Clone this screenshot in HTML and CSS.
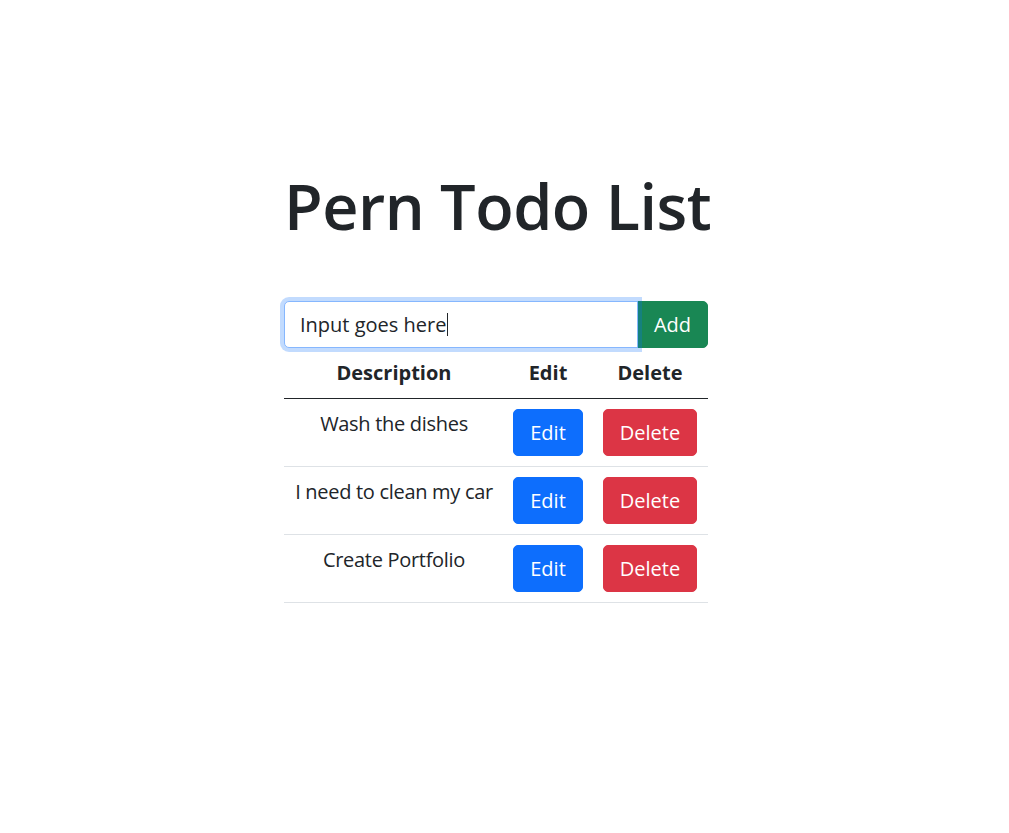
FILE: index.html
```html
<!DOCTYPE html>
<html lang="en">
<head>
<meta charset="utf-8">
<title>Pern Todo List</title>
<link rel="stylesheet" href="styles.css">
</head>
<body>
<div class="page">
  <main class="app">
    <h1 class="title">Pern Todo List</h1>
    <form class="input-group">
      <div class="form-control focused"><span class="value">Input goes here</span><span class="caret"></span></div>
      <button type="button" class="btn btn-success btn-add">Add</button>
    </form>
    <table class="table">
      <thead>
        <tr>
          <th class="col-desc">Description</th>
          <th class="col-edit">Edit</th>
          <th class="col-del">Delete</th>
        </tr>
      </thead>
      <tbody>
        <tr>
          <td class="desc">Wash the dishes</td>
          <td><button type="button" class="btn btn-primary">Edit</button></td>
          <td><button type="button" class="btn btn-danger">Delete</button></td>
        </tr>
        <tr>
          <td class="desc">I need to clean my car</td>
          <td><button type="button" class="btn btn-primary">Edit</button></td>
          <td><button type="button" class="btn btn-danger">Delete</button></td>
        </tr>
        <tr>
          <td class="desc">Create Portfolio</td>
          <td><button type="button" class="btn btn-primary">Edit</button></td>
          <td><button type="button" class="btn btn-danger">Delete</button></td>
        </tr>
      </tbody>
    </table>
  </main>
</div>
</body>
</html>
```

FILE: styles.css
```css
html, body {
  margin: 0;
  padding: 0;
  background: #fff;
}

body {
  font-family: "Open Sans", "Noto Sans", "DejaVu Sans", sans-serif;
  color: #212529;
  font-size: 20px;
  line-height: 1.5;
}

.page {
  width: 992px;
  display: flex;
  justify-content: center;
}

.app {
  width: 424px;
  display: flex;
  flex-direction: column;
  align-items: stretch;
  padding-top: 167px;
}

.title {
  margin: 0 0 57px 0;
  font-size: 63px;
  font-weight: 600;
  line-height: 77px;
  text-align: center;
  letter-spacing: -0.5px;
  white-space: nowrap;
}

.input-group {
  display: flex;
  margin: 0;
}

.form-control {
  flex: 1 1 auto;
  display: flex;
  align-items: center;
  padding: 8px 15px;
  line-height: 29px;
  font-size: 20px;
  border: 1px solid #ced4da;
  border-radius: 5px 0 0 5px;
  background: #fff;
  color: #212529;
}

.form-control.focused {
  border-color: #86b7fe;
  box-shadow: 0 0 0 4px rgba(13, 110, 253, 0.25);
  position: relative;
  z-index: 1;
}

.caret {
  display: inline-block;
  width: 1px;
  height: 23px;
  background: #212529;
  margin-left: 1px;
}

.btn {
  display: inline-block;
  font-family: inherit;
  font-size: 20px;
  line-height: 29px;
  padding: 8px 16px;
  border: 1px solid transparent;
  border-radius: 5px;
  color: #fff;
  cursor: pointer;
  vertical-align: middle;
}

.btn-add {
  border-radius: 0 5px 5px 0;
  margin-left: -1px;
}

.btn-success {
  background: #198754;
  border-color: #198754;
}

.btn-primary {
  background: #0d6efd;
  border-color: #0d6efd;
}

.btn-danger {
  background: #dc3545;
  border-color: #dc3545;
}

.table {
  width: 424px;
  border-collapse: collapse;
  table-layout: fixed;
  margin: 0;
}

.table th,
.table td {
  box-sizing: border-box;
  text-align: center;
  padding: 10px 8px;
  line-height: 30px;
  vertical-align: top;
}

.col-desc { width: 220px; }
.col-edit { width: 88px; }
.col-del { width: 116px; }

.table th {
  font-weight: 700;
  border-bottom: 1px solid #212529;
}

.table td {
  border-bottom: 1px solid #dee2e6;
}

.table td.desc {
  white-space: nowrap;
  padding-left: 2px;
  padding-right: 2px;
  letter-spacing: -0.3px;
}

.table td .btn {
  vertical-align: top;
}
```
